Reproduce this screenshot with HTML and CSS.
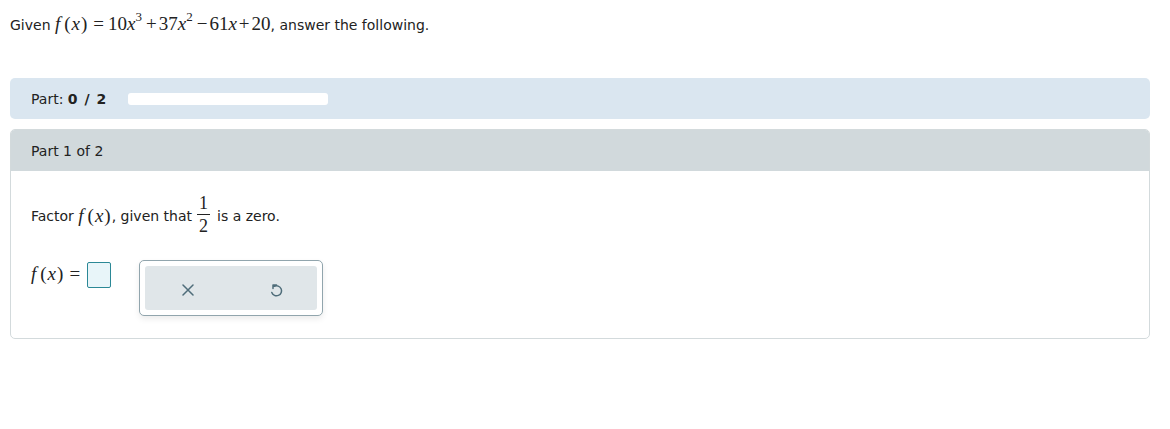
FILE: index.html
```html
<!DOCTYPE html>
<html>
<head>
<meta charset="utf-8">
<link rel="stylesheet" href="styles.css">
</head>
<body>
<div class="page">
  <p class="intro">Given <span class="m"><i class="fn">f</i><span class="p">(</span><i>x</i><span class="p">)</span><span class="op eq">=</span>10<i>x</i><sup>3</sup><span class="op">+</span>37<i>x</i><sup>2</sup><span class="op">−</span>61<i>x</i><span class="op">+</span>20</span>, answer the following.</p>

  <div class="partbar">
    <span class="partlabel">Part: <b>0 / 2</b></span>
    <div class="progress"></div>
  </div>

  <div class="card">
    <div class="cardhead">Part 1 of 2</div>
    <div class="cardbody">
      <p class="question">Factor&nbsp;<span class="m"><i class="fn">f</i><span class="p">(</span><i>x</i><span class="p">)</span></span>, given that <span class="frac"><span class="num">1</span><span class="den">2</span></span> is a zero.</p>
      <div class="answer">
        <span class="m lhs"><i class="fn">f</i><span class="p">(</span><i>x</i><span class="p">)</span><span class="op">=</span></span>
        <span class="box"></span>
        <div class="tools">
          <div class="toolsin">
            <svg class="ico" width="12" height="12" viewBox="0 0 12 12"><path d="M1 1 L11 11 M11 1 L1 11" stroke="#4f6d7a" stroke-width="1.5" fill="none" stroke-linecap="round"/></svg>
            <svg class="ico" width="13" height="15" viewBox="0 0 13 15"><path d="M6.5 3 H3 V6.5 M4.3 4.3 A5 5 0 1 1 1.8 10.5" stroke="#4f6d7a" stroke-width="1.5" fill="none" stroke-linecap="round" stroke-linejoin="round"/></svg>
          </div>
        </div>
      </div>
    </div>
  </div>
</div>
</body>
</html>
```
FILE: styles.css
```css
html, body { margin: 0; padding: 0; background: #fff; }
body { font-family: "DejaVu Sans", Verdana, sans-serif; font-size: 14px; color: #222; }
.page { padding: 0 20px 0 10px; }
.intro { margin: 0; padding-top: 13px; height: 78px; box-sizing: border-box; }
.m { font-family: "Liberation Serif", "Times New Roman", serif; font-size: 19px; }
.m i { font-style: italic; }
.m .fn { margin-right: 3px; }
.m .p { margin: 0 1px; }
.m .op { margin: 0 2px; }
.m .op.eq { margin: 0 4px 0 5px; }
.m sup { font-size: 13px; vertical-align: 9px; line-height: 0; margin-left: 0; margin-right: 2px; }
.partbar { display: flex; align-items: center; height: 41px; background: #dae6f0; border-radius: 5px; padding-left: 21px; box-sizing: border-box; }
.partlabel b { font-weight: bold; letter-spacing: 1px; }
.progress { width: 200px; height: 12px; background: #fff; border-radius: 3px; margin-left: 21px; }
.card { margin-top: 10px; border: 1px solid #d3dadc; border-radius: 5px; overflow: hidden; }
.cardhead { background: #d1d9dc; height: 41px; padding-left: 20px; display: flex; align-items: center; }
.cardbody { padding: 20px 20px 22px 20px; }
.question { margin: 0; display: flex; align-items: center; height: 50px; }
.question .m { margin: 0; }
.frac { display: inline-flex; flex-direction: column; align-items: center; font-family: "Liberation Serif", serif; font-size: 18px; margin: -4px 7px 0 5px; line-height: 18px; }
.frac .num { border-bottom: 1px solid #222; padding: 0 2px 2px; }
.frac .den { padding-top: 2px; }
.answer { display: flex; align-items: flex-start; margin-top: 20px; }
.lhs { margin-top: 2px; }
.lhs .op { margin: 0 4px 0 5px; }
.box { width: 22px; height: 24px; border: 1.5px solid #2b8896; background: #e8f5f9; border-radius: 2px; margin-left: 3px; margin-top: 1px; }
.tools { margin-left: 28px; width: 184px; height: 56px; border: 1px solid #91a5ad; border-radius: 5px; padding: 5px; box-sizing: border-box; box-shadow: 0 3px 6px rgba(0,0,0,0.08); background: #fff; margin-top: -1px; }
.toolsin { background: #e0e6e9; border-radius: 3px; height: 100%; display: flex; align-items: center; gap: 76px; padding: 3px 0 0 37px; box-sizing: border-box; }
.ico { display: block; }
```
